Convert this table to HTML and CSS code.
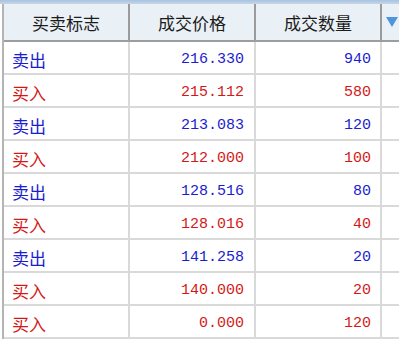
FILE: index.html
```html
<!DOCTYPE html>
<html lang="zh">
<head>
<meta charset="utf-8">
<link rel="stylesheet" href="styles.css">
</head>
<body>
<div class="band"></div>
<div class="table">
  <div class="head">
    <div class="hc">买卖标志</div>
    <div class="hc">成交价格</div>
    <div class="hc">成交数量</div>
    <div class="hc last"><svg class="tri" width="12" height="10" viewBox="0 0 12 10"><polygon points="0,0 12,0 6,10" fill="#4f95dd"/></svg></div>
  </div>
  <div class="row sell"><div class="c flag">卖出</div><div class="c num">216.330</div><div class="c num n3">940</div><div class="c last"></div></div>
  <div class="row buy"><div class="c flag">买入</div><div class="c num">215.112</div><div class="c num n3">580</div><div class="c last"></div></div>
  <div class="row sell"><div class="c flag">卖出</div><div class="c num">213.083</div><div class="c num n3">120</div><div class="c last"></div></div>
  <div class="row buy"><div class="c flag">买入</div><div class="c num">212.000</div><div class="c num n3">100</div><div class="c last"></div></div>
  <div class="row sell"><div class="c flag">卖出</div><div class="c num">128.516</div><div class="c num n3">80</div><div class="c last"></div></div>
  <div class="row buy"><div class="c flag">买入</div><div class="c num">128.016</div><div class="c num n3">40</div><div class="c last"></div></div>
  <div class="row sell"><div class="c flag">卖出</div><div class="c num">141.258</div><div class="c num n3">20</div><div class="c last"></div></div>
  <div class="row buy"><div class="c flag">买入</div><div class="c num">140.000</div><div class="c num n3">20</div><div class="c last"></div></div>
  <div class="row buy"><div class="c flag">买入</div><div class="c num">0.000</div><div class="c num n3">120</div><div class="c last"></div></div>
</div>
</body>
</html>
```
FILE: styles.css
```css
html, body {
  margin: 0;
  padding: 0;
  background: #ffffff;
  width: 399px;
  height: 344px;
  overflow: hidden;
}
.band {
  height: 4px;
  background: linear-gradient(#a9c3de, #c3d6ea);
}
.table {
  margin-left: 2px;
  border-left: 2px solid #b4b4b4;
}
.head {
  display: grid;
  grid-template-columns: 126px 126px 126px 1fr;
  height: 38px;
  background: #eaf1f6;
  border-bottom: 2px solid #9d9d9d;
  box-sizing: border-box;
}
.hc {
  box-sizing: border-box;
  border-right: 2px solid #9a9a9a;
  display: flex;
  align-items: center;
  justify-content: center;
  font-family: "Noto Sans CJK SC", sans-serif;
  font-size: 17px;
  color: #1c1c1c;
  padding-top: 1px;
}
.hc.last {
  border-right: none;
  justify-content: flex-start;
  padding-left: 4px;
  padding-bottom: 2px;
}
.row {
  display: grid;
  grid-template-columns: 126px 126px 126px 1fr;
  height: 33px;
  box-sizing: border-box;
  border-bottom: 2px solid #d9d9d9;
}
.c {
  box-sizing: border-box;
  border-right: 2px solid #d9d9d9;
  display: flex;
  align-items: center;
  padding-top: 3px;
}
.c.last {
  border-right: none;
}
.flag {
  font-family: "Noto Sans CJK SC", sans-serif;
  font-size: 17px;
  padding-left: 8px;
}
.num {
  justify-content: flex-end;
  font-family: "Liberation Mono", monospace;
  font-size: 15px;
  padding-right: 10px;
}
.num.n3 {
  padding-right: 9px;
}
.sell .c {
  color: #1c1cd0;
}
.buy .c {
  color: #d41818;
}
```
